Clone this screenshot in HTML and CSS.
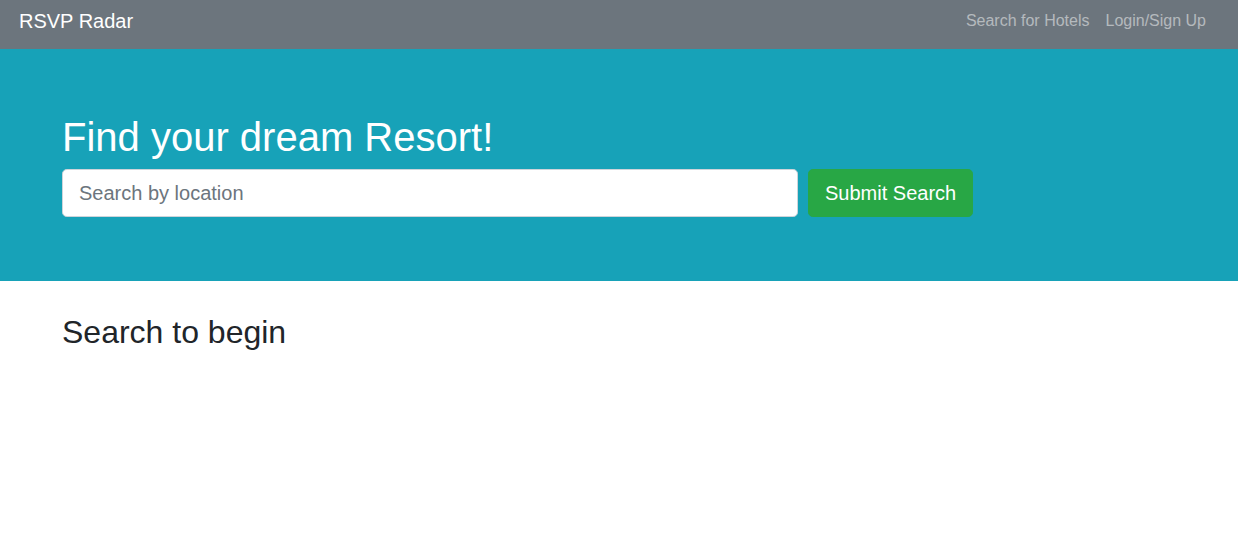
FILE: index.html
```html
<!DOCTYPE html>
<html lang="en">
<head>
<meta charset="utf-8">
<title>RSVP Radar</title>
<link rel="stylesheet" href="styles.css">
</head>
<body>
<nav class="navbar">
  <a class="brand" href="#">RSVP Radar</a>
  <div class="nav-links">
    <a class="nav-link" href="#">Search for Hotels</a>
    <a class="nav-link" href="#">Login/Sign Up</a>
  </div>
</nav>
<header class="jumbotron">
  <div class="container">
    <h1 class="title">Find your dream Resort!</h1>
    <form class="search-form">
      <input class="search-input" type="text" placeholder="Search by location">
      <button class="btn-submit" type="button">Submit Search</button>
    </form>
  </div>
</header>
<main class="container">
  <h2 class="subtitle">Search to begin</h2>
</main>
</body>
</html>
```
FILE: styles.css
```css
* { box-sizing: border-box; }
html, body { margin: 0; padding: 0; }
body {
  font-family: "Liberation Sans", Arial, sans-serif;
  font-size: 16px;
  line-height: 1.5;
  color: #212529;
  background: #fff;
}
.navbar {
  height: 49px;
  background: #6c757d;
  display: flex;
  justify-content: space-between;
  align-items: flex-start;
  padding: 0 24px 0 19px;
}
.brand {
  color: #fff;
  font-size: 20px;
  line-height: 30px;
  margin-top: 6px;
  text-decoration: none;
}
.nav-links {
  display: flex;
  margin-top: 9px;
}
.nav-link {
  color: rgba(255, 255, 255, 0.5);
  font-size: 16px;
  line-height: 24px;
  padding: 0 8px;
  text-decoration: none;
}
.jumbotron {
  background: #17a2b8;
  padding: 64px 0;
  margin-bottom: 32px;
}
.container {
  padding: 0 62px;
}
.title {
  margin: 0 0 8px;
  font-size: 40px;
  font-weight: 400;
  line-height: 48px;
  color: #fff;
}
.search-form {
  display: flex;
  gap: 10px;
  margin: 0;
}
.search-input {
  width: 736px;
  height: 48px;
  padding: 8px 16px;
  font-family: inherit;
  font-size: 20px;
  line-height: 1.5;
  color: #495057;
  background: #fff;
  border: 1px solid #ced4da;
  border-radius: 4.8px;
  outline: none;
}
.search-input::placeholder { color: #6c757d; }
.btn-submit {
  height: 48px;
  padding: 8px 16px;
  font-family: inherit;
  font-size: 20px;
  line-height: 1.5;
  color: #fff;
  background: #28a745;
  border: 1px solid #28a745;
  border-radius: 4.8px;
  cursor: pointer;
}
.subtitle {
  margin: 0;
  font-size: 32px;
  font-weight: 400;
  line-height: 38.4px;
  color: #212529;
}
```
